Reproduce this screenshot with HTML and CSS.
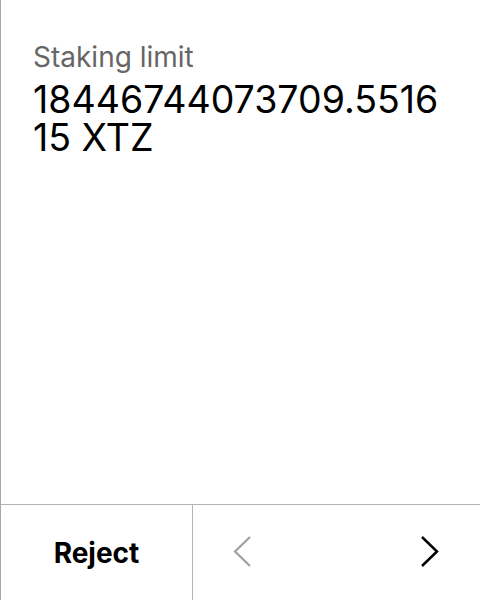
FILE: index.html
```html
<!DOCTYPE html>
<html>
<head>
<meta charset="utf-8">
<link rel="stylesheet" href="styles.css">
</head>
<body>
<div class="screen">
  <main class="content">
    <div class="label">Staking limit</div>
    <div class="value">18446744073709.5516<br>15 XTZ</div>
  </main>
  <footer class="actions">
    <div class="reject">Reject</div>
    <div class="nav">
      <svg class="chev prev" width="20" height="31" viewBox="0 0 20 31"><polyline points="18,1 3,15.5 18,30" fill="none" stroke="#a0a0a0" stroke-width="2.2"/></svg>
      <svg class="chev next" width="20" height="31" viewBox="0 0 20 31"><polyline points="2,1 17,15.5 2,30" fill="none" stroke="#000" stroke-width="2.5"/></svg>
    </div>
  </footer>
</div>
</body>
</html>
```
FILE: styles.css
```css
html, body {
  margin: 0;
  padding: 0;
  background: #fff;
}
.screen {
  width: 480px;
  height: 600px;
  box-sizing: border-box;
  border-left: 1px solid #a8a8a8;
  display: flex;
  flex-direction: column;
  font-family: Inter, "Noto Sans", sans-serif;
}
.content {
  flex: 1;
  padding: 40px 0 0 32px;
}
.label {
  font-size: 28px;
  line-height: 34px;
  color: #666;
}
.value {
  margin-top: 7px;
  font-size: 37.5px;
  line-height: 38px;
  color: #000;
}
.actions {
  height: 95px;
  border-top: 1px solid #b4b4b4;
  display: flex;
}
.reject {
  width: 191px;
  border-right: 1px solid #b4b4b4;
  display: flex;
  align-items: center;
  justify-content: center;
  font-size: 28px;
  font-weight: 700;
  color: #000;
}
.nav {
  flex: 1;
  display: flex;
  align-items: center;
  justify-content: space-between;
  padding: 0 40px 2px 39px;
}
```
